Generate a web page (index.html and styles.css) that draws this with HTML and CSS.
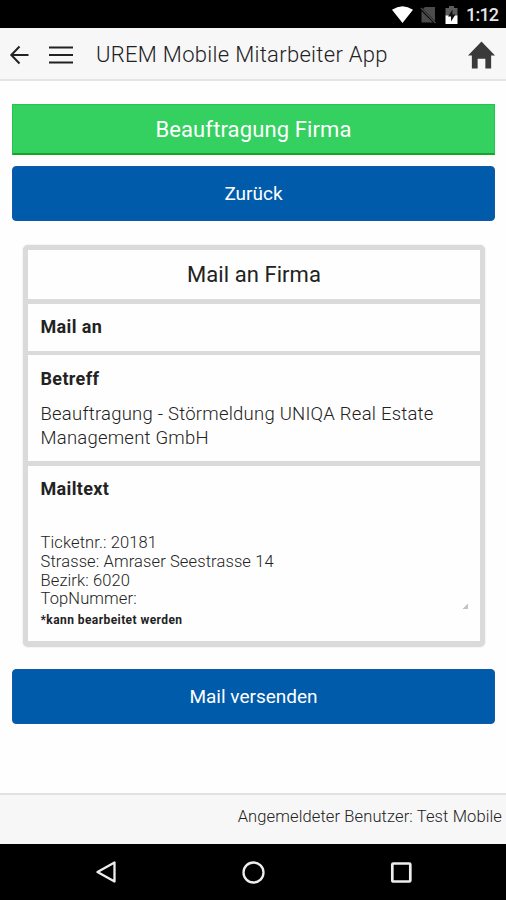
FILE: index.html
```html
<!DOCTYPE html>
<html lang="de">
<head>
<meta charset="utf-8">
<title>UREM Mobile Mitarbeiter App</title>
<link rel="stylesheet" href="styles.css">
</head>
<body>
<div class="status">
  <svg class="wifi" width="21" height="17" viewBox="0 0 21 17"><path d="M0 3.8Q10.500-3.400 21 3.800L10.500 17Z" fill="#fff"/></svg>
  <svg class="sim" width="17" height="18" viewBox="0 0 17 18"><path d="M5 1h10v14L3 3Z M1.500 5L13 16.500H1.500Z" fill="#4b4b4b"/><path d="M1 2L15.500 17" stroke="#4b4b4b" stroke-width="1.300"/></svg>
  <svg class="battery" width="13" height="18" viewBox="0 0 13 18"><path d="M4 0h5v2h3.500v8H.5V2H4Z" fill="#5c5c5c"/><path d="M.5 9.500h12V18H.5Z" fill="#fff"/><path d="M7.500 3.500L3 10.500h3v5l4.500-7h-3Z" fill="#111"/></svg>
  <span class="clock">1:12</span>
</div>
<header class="header">
  <svg class="back" width="20" height="20" viewBox="0 0 20 20"><path d="M19.500 10H2.500M10.500 1.500L2.300 10L10.500 18.500" fill="none" stroke="#222" stroke-width="2"/></svg>
  <svg class="menu" width="24" height="18" viewBox="0 0 24 18"><path d="M.5 1.500h23M.5 9h23M.5 16.500h23" stroke="#222" stroke-width="2.200" stroke-linecap="round"/></svg>
  <h1 class="title">UREM Mobile Mitarbeiter App</h1>
  <svg class="home" width="27" height="28" viewBox="0 0 28 28"><path d="M14 0L28 14.500H24V28H18V18H10V28H4V14.500H0Z" fill="#3a3a3a"/></svg>
</header>
<main class="main">
  <div class="banner"><span class="t-banner">Beauftragung Firma</span></div>
  <button class="button">Zurück</button>
  <section class="card">
    <h2 class="heading"><span>Mail an Firma</span></h2>
    <div class="row mail-to"><strong class="label">Mail an</strong></div>
    <div class="row subject"><strong class="label">Betreff</strong><p class="value">Beauftragung - Störmeldung UNIQA Real Estate<br>Management GmbH</p></div>
    <div class="row body">
      <strong class="label">Mailtext</strong>
      <div class="text">Ticketnr.: 20181<br>Strasse: Amraser Seestrasse 14<br>Bezirk: 6020<br>TopNummer:<i class="grip"></i></div>
      <strong class="hint">*kann bearbeitet werden</strong>
    </div>
  </section>
  <button class="button send">Mail versenden</button>
</main>
<footer class="footer"><span>Angemeldeter Benutzer: Test Mobile</span></footer>
<nav class="nav">
  <svg width="22" height="24" viewBox="0 0 22 24"><path d="M19.500 2.500V21.500L2.500 12Z" fill="none" stroke="#eee" stroke-width="2.300" stroke-linejoin="round"/></svg>
  <svg width="24" height="24" viewBox="0 0 24 24"><circle cx="12.500" cy="12.500" r="10" fill="none" stroke="#eee" stroke-width="2.300"/></svg>
  <svg width="24" height="24" viewBox="0 0 24 24"><rect x="3.300" y="3.500" width="18" height="18" rx="1" fill="none" stroke="#eee" stroke-width="2.700"/></svg>
</nav>
</body>
</html>
```
FILE: styles.css
```css
* { box-sizing: border-box; }
body {
  margin: 0;
  width: 506px;
  height: 900px;
  display: flex;
  flex-direction: column;
  overflow: hidden;
  background: #fefefe;
  color: #222;
  font-family: Roboto, "Liberation Sans", sans-serif;
}
h1, h2, p { margin: 0; font-weight: 400; }
svg { display: block; flex: none; }
.status { height: 28px; flex: none; background: #000; display: flex; align-items: center; padding: 1px 8px 0 392px; }
.sim { margin-left: 7px; }
.battery { margin-left: 8px; }
.clock { margin-left: 8px; color: #e6e6e6; font-size: 18px; font-weight: 500; line-height: 28px; letter-spacing: -.8px; white-space: nowrap; }
.header { height: 53px; flex: none; display: flex; align-items: center; background: #f7f7f7; border-bottom: 2px solid #e4e4e4; padding: 2px 11px 0 9px; }
.menu { margin-left: 20px; }
.title { margin-left: 23px; flex: 1; font-size: 22px; font-weight: 300; line-height: 30px; letter-spacing: .3px; white-space: nowrap; }
.main { flex: 1; padding: 23px 11px 0 12px; }
.banner { height: 51px; background: #34d060; border: 1px solid #22c550; border-bottom: 2px solid #14a52d; border-width: 1px 1px 2px; color: #fff; font-size: 22px; line-height: 49px; text-align: center; letter-spacing: .12px; }
.button { display: block; width: 100%; height: 55px; margin: 11px 0 0; padding: 0; border: 1px solid #1458a8; border-radius: 4px; background: #005bab; color: #fff; font: 400 19px/53px Roboto, "Liberation Sans", sans-serif; text-align: center; letter-spacing: 0; }
.card { margin: 24px 10px 0 11px; border: 5px solid #dadada; border-bottom-width: 6px; border-radius: 5px; background: #fefefe; box-shadow: 0 0 2px #ddd; }
.heading { height: 49px; font-size: 22px; line-height: 49px; text-align: center; letter-spacing: .06px; }
.row { border-top: 5px solid #dadada; padding: 0 12px 0 12.500px; }
.label { display: block; font-size: 18px; font-weight: 700; line-height: 24px; letter-spacing: .35px; }
.mail-to { height: 52px; padding-top: 11px; }
.subject { height: 110px; padding-top: 12px; border-top-width: 4px; }
.value { margin-top: 11px; font-size: 18.500px; font-weight: 300; line-height: 24px; letter-spacing: .23px; white-space: nowrap; }
.body { height: 180px; padding-top: 11px; }
.text { margin-top: 33px; position: relative; font-size: 16.500px; font-weight: 300; line-height: 18.800px; letter-spacing: .12px; }
.grip { position: absolute; right: 0; bottom: 0; width: 5px; height: 5px; background: linear-gradient(135deg, transparent 50%, #c4c4c4 50%); }
.hint { display: block; margin-top: 3px; font-size: 12px; line-height: 16px; letter-spacing: .42px; }
.send { margin-top: 22px; }
.footer { height: 51px; flex: none; background: #f7f7f7; border-top: 2px solid #e2e2e2; padding: 11px 4px 0; text-align: right; font-size: 16.500px; font-weight: 300; line-height: 22px; letter-spacing: .12px; }
.nav { height: 56px; flex: none; background: #000; display: flex; align-items: center; justify-content: space-between; padding: 0 93px 0 95px; }
```
